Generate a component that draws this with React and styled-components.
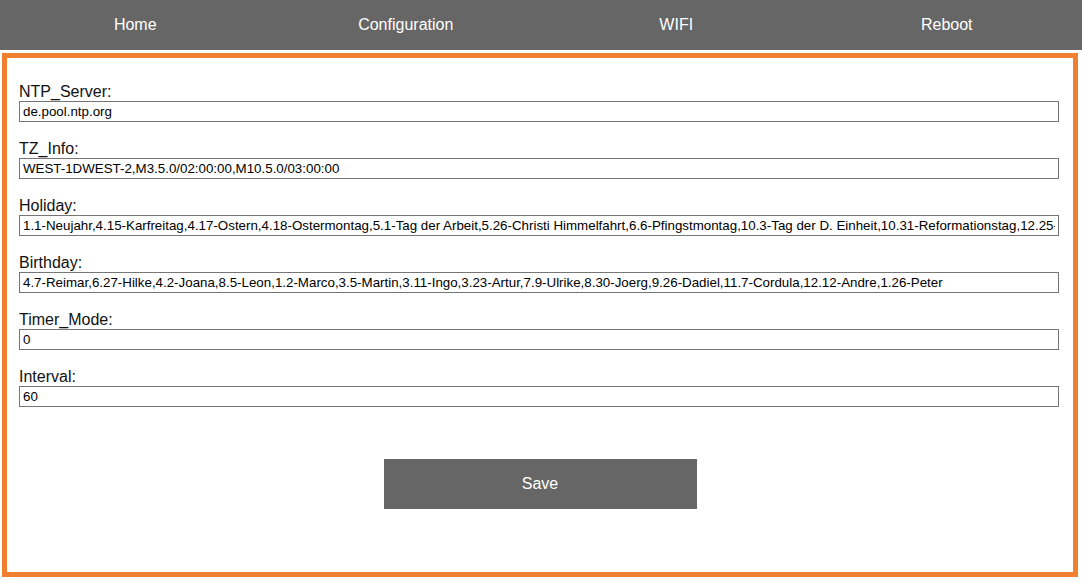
import React from 'react'
import styled, { createGlobalStyle } from 'styled-components'

const fields = [
  { name: 'NTP_Server', value: 'de.pool.ntp.org' },
  { name: 'TZ_Info', value: 'WEST-1DWEST-2,M3.5.0/02:00:00,M10.5.0/03:00:00' },
  {
    name: 'Holiday',
    value:
      '1.1-Neujahr,4.15-Karfreitag,4.17-Ostern,4.18-Ostermontag,5.1-Tag der Arbeit,5.26-Christi Himmelfahrt,6.6-Pfingstmontag,10.3-Tag der D. Einheit,10.31-Reformationstag,12.25-1.Weihnachtstag,12.26-2.Weihnachtstag',
  },
  {
    name: 'Birthday',
    value:
      '4.7-Reimar,6.27-Hilke,4.2-Joana,8.5-Leon,1.2-Marco,3.5-Martin,3.11-Ingo,3.23-Artur,7.9-Ulrike,8.30-Joerg,9.26-Dadiel,11.7-Cordula,12.12-Andre,1.26-Peter',
  },
  { name: 'Timer_Mode', value: '0' },
  { name: 'Interval', value: '60' },
]

const menu = ['Home', 'Configuration', 'WIFI', 'Reboot']

function App() {
  return (
    <>
      <Global />
      <Nav>
        {menu.map((m) => (
          <NavItem key={m}>{m}</NavItem>
        ))}
      </Nav>
      <Panel>
        <Form onSubmit={(e) => e.preventDefault()}>
          {fields.map((f) => (
            <Field key={f.name}>
              <Label>{f.name}:</Label>
              <Input type="text" defaultValue={f.value} />
            </Field>
          ))}
          <Actions>
            <Button type="submit">Save</Button>
          </Actions>
        </Form>
      </Panel>
    </>
  )
}

export default App

const Global = createGlobalStyle`
body{
    margin: 0;
    background: #FFFFFF;
    font-family: "Liberation Sans", Arial, sans-serif;
}
`
const Nav = styled.nav`
display: flex;
height: 50px;
background: #666666;
`
const NavItem = styled.a`
flex: 1;
display: flex;
align-items: center;
justify-content: center;
color: #FFFFFF;
font-size: 16px;
cursor: pointer;
`
const Panel = styled.main`
margin: 3px 4px 0 2px;
height: 524px;
box-sizing: border-box;
border: 5px solid #F08030;
padding: 25px 14px 0 12px;
`
const Form = styled.form`
display: flex;
flex-direction: column;
gap: 18px;
`
const Field = styled.div`
display: flex;
flex-direction: column;
`
const Label = styled.label`
font-size: 16px;
line-height: 18px;
color: #111111;
`
const Input = styled.input`
box-sizing: border-box;
width: 100%;
height: 21px;
padding: 1px 3px;
border: 1px solid #767676;
border-radius: 0;
font-family: "Liberation Sans", Arial, sans-serif;
font-size: 13.33px;
color: #000000;
outline: none;
`
const Actions = styled.div`
display: flex;
justify-content: center;
padding: 34px 0 0 2px;
`
const Button = styled.button`
width: 313px;
height: 50px;
background: #666666;
border: none;
color: #FFFFFF;
font-family: "Liberation Sans", Arial, sans-serif;
font-size: 16px;
cursor: pointer;
`
